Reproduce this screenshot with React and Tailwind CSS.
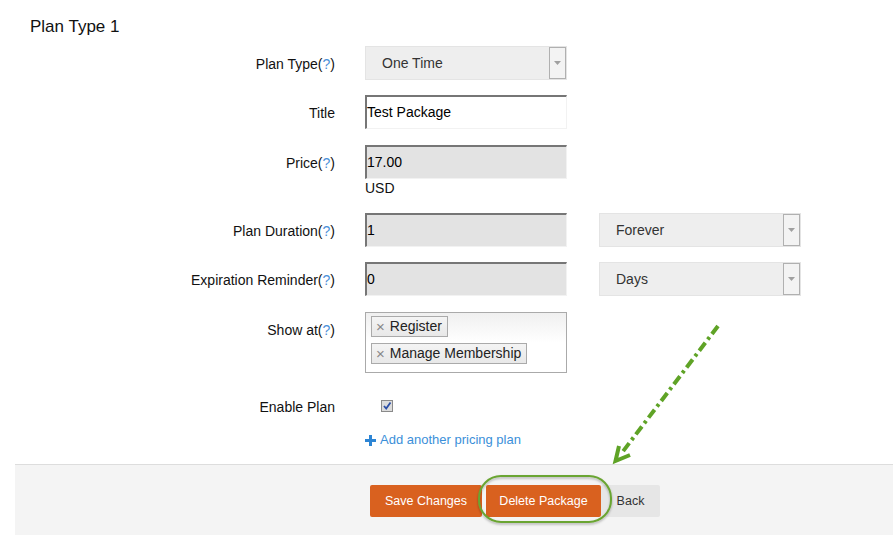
import React from "react";

const font = { fontFamily: '"Liberation Sans", Arial, sans-serif' };

function Q() {
  return <span className="text-[#4a90d9]">?</span>;
}

function Label({ children, h = "h-[34px]" }) {
  return (
    <div className={`w-[335px] shrink-0 text-right text-[14px] text-[#111] flex items-center justify-end pt-[2px] ${h}`}>
      {children}
    </div>
  );
}

function Select({ value, cls = "" }) {
  return (
    <div className={`w-[202px] h-[34px] bg-[#eeeeee] border border-[#e4e4e4] flex items-center justify-between ${cls}`}>
      <span className="pl-[16px] text-[14px] text-[#333]">{value}</span>
      <span className="w-[17px] h-[32px] border border-[#b0b0b0] bg-[#f3f3f3] flex items-center justify-center">
        <svg width="7" height="4" viewBox="0 0 7 4">
          <path d="M0 0 L7 0 L3.5 4 Z" fill="#a0a0a0" />
        </svg>
      </span>
    </div>
  );
}

function Input({ value, bg = "bg-white" }) {
  return (
    <div
      className={`w-[202px] h-[34px] ${bg} border-t-2 border-l-2 border-r border-b border-t-[#767676] border-l-[#767676] border-r-[#f2f2f2] border-b-[#f2f2f2] flex items-center text-[14px] text-black`}
    >
      <span>{value}</span>
    </div>
  );
}

function Tag({ children }) {
  return (
    <div className="inline-flex items-center h-[21px] border border-[#aaa] bg-gradient-to-b from-[#f4f4f4] to-[#e8e8e8] pl-[4px] pr-[5px] text-[14px] text-[#222]">
      <span className="text-[#888] text-[15px] mr-[5px] leading-none">×</span>
      {children}
    </div>
  );
}

export default function App() {
  return (
    <div className="relative w-[893px] h-[535px] bg-white overflow-hidden" style={font}>
      <div className="pl-[30px] pt-[17px] h-[37px] text-[17px] leading-[20px] text-[#111]">Plan Type 1</div>

      <div className="flex gap-[30px] mt-[9px]">
        <Label>
          Plan Type(<Q />)
        </Label>
        <Select value="One Time" />
      </div>

      <div className="flex gap-[30px] mt-[15px]">
        <Label>Title</Label>
        <Input value="Test Package" />
      </div>

      <div className="flex gap-[30px] mt-[16px]">
        <Label>
          Price(<Q />)
        </Label>
        <div className="flex flex-col">
          <Input value="17.00" bg="bg-[#e3e3e3]" />
          <div className="h-[16px] text-[14px] leading-[16px] mt-[1px] text-[#111]">USD</div>
        </div>
      </div>

      <div className="flex gap-[30px] mt-[17px]">
        <Label>
          Plan Duration(<Q />)
        </Label>
        <Input value="1" bg="bg-[#e3e3e3]" />
        <Select value="Forever" cls="ml-[2px]" />
      </div>

      <div className="flex gap-[30px] mt-[15px]">
        <Label>
          Expiration Reminder(<Q />)
        </Label>
        <Input value="0" bg="bg-[#e3e3e3]" />
        <Select value="Days" cls="ml-[2px]" />
      </div>

      <div className="flex gap-[30px] mt-[16px]">
        <Label>
          Show at(<Q />)
        </Label>
        <div className="w-[202px] h-[61px] border border-[#aaa] bg-gradient-to-b from-[#f0f0f0] via-white to-white pl-[5px] pt-[3px] flex flex-col items-start gap-[6px]">
          <Tag>Register</Tag>
          <Tag>Manage Membership</Tag>
        </div>
      </div>

      <div className="flex gap-[30px] mt-[23px] h-[20px]">
        <Label h="h-[20px]">Enable Plan</Label>
        <div className="flex items-center pl-[16px]">
          <span className="w-[12px] h-[12px] border border-[#8a8a8a] bg-[#dcdcdc] flex items-center justify-center">
            <svg width="10" height="10" viewBox="0 0 10 10">
              <path d="M2 5 L4.2 7.5 L8.5 1.5" stroke="#2b4ea6" strokeWidth="1.8" fill="none" />
            </svg>
          </span>
        </div>
      </div>

      <div className="flex mt-[14px] h-[20px] pl-[365px] items-center text-[13px] text-[#3b8fd9]">
        <svg width="11" height="11" viewBox="0 0 11 11" className="mr-[4px]">
          <path d="M4 0 H7 V4 H11 V7 H7 V11 H4 V7 H0 V4 H4 Z" fill="#2d85d4" />
        </svg>
        Add another pricing plan
      </div>

      <div className="mt-[14px] ml-[15px] h-[90px] bg-[#f4f4f4] border-t border-[#dddddd] pt-[20px] pl-[355px] flex items-start">
        <button className="w-[112px] h-[32px] bg-[#d9611f] text-white text-[12.5px] rounded-[2px]">Save Changes</button>
        <button className="ml-[4px] w-[115px] h-[32px] bg-[#d9611f] text-white text-[12.5px] rounded-[2px]">Delete Package</button>
        <button className="w-[59px] h-[32px] bg-[#e6e6e6] text-[#333] text-[12.5px] rounded-[2px]">Back</button>
      </div>

      <svg className="absolute left-0 top-0 pointer-events-none" width="893" height="535" viewBox="0 0 893 535">
        <defs>
          <filter id="sh" x="-20%" y="-20%" width="140%" height="140%">
            <feDropShadow dx="0" dy="1.5" stdDeviation="1.2" floodColor="#000" floodOpacity="0.3" />
          </filter>
        </defs>
        <rect x="479" y="476" width="132" height="46" rx="22" ry="22" fill="none" stroke="#6aa532" strokeWidth="2" filter="url(#sh)" />
        <line x1="718" y1="326" x2="621" y2="454" stroke="#5fa326" strokeWidth="4" strokeDasharray="10 4 3 4" />
        <path d="M619 446 L615.5 461 L630 455" stroke="#5fa326" strokeWidth="4" fill="none" strokeLinejoin="miter" />
      </svg>
    </div>
  );
}
